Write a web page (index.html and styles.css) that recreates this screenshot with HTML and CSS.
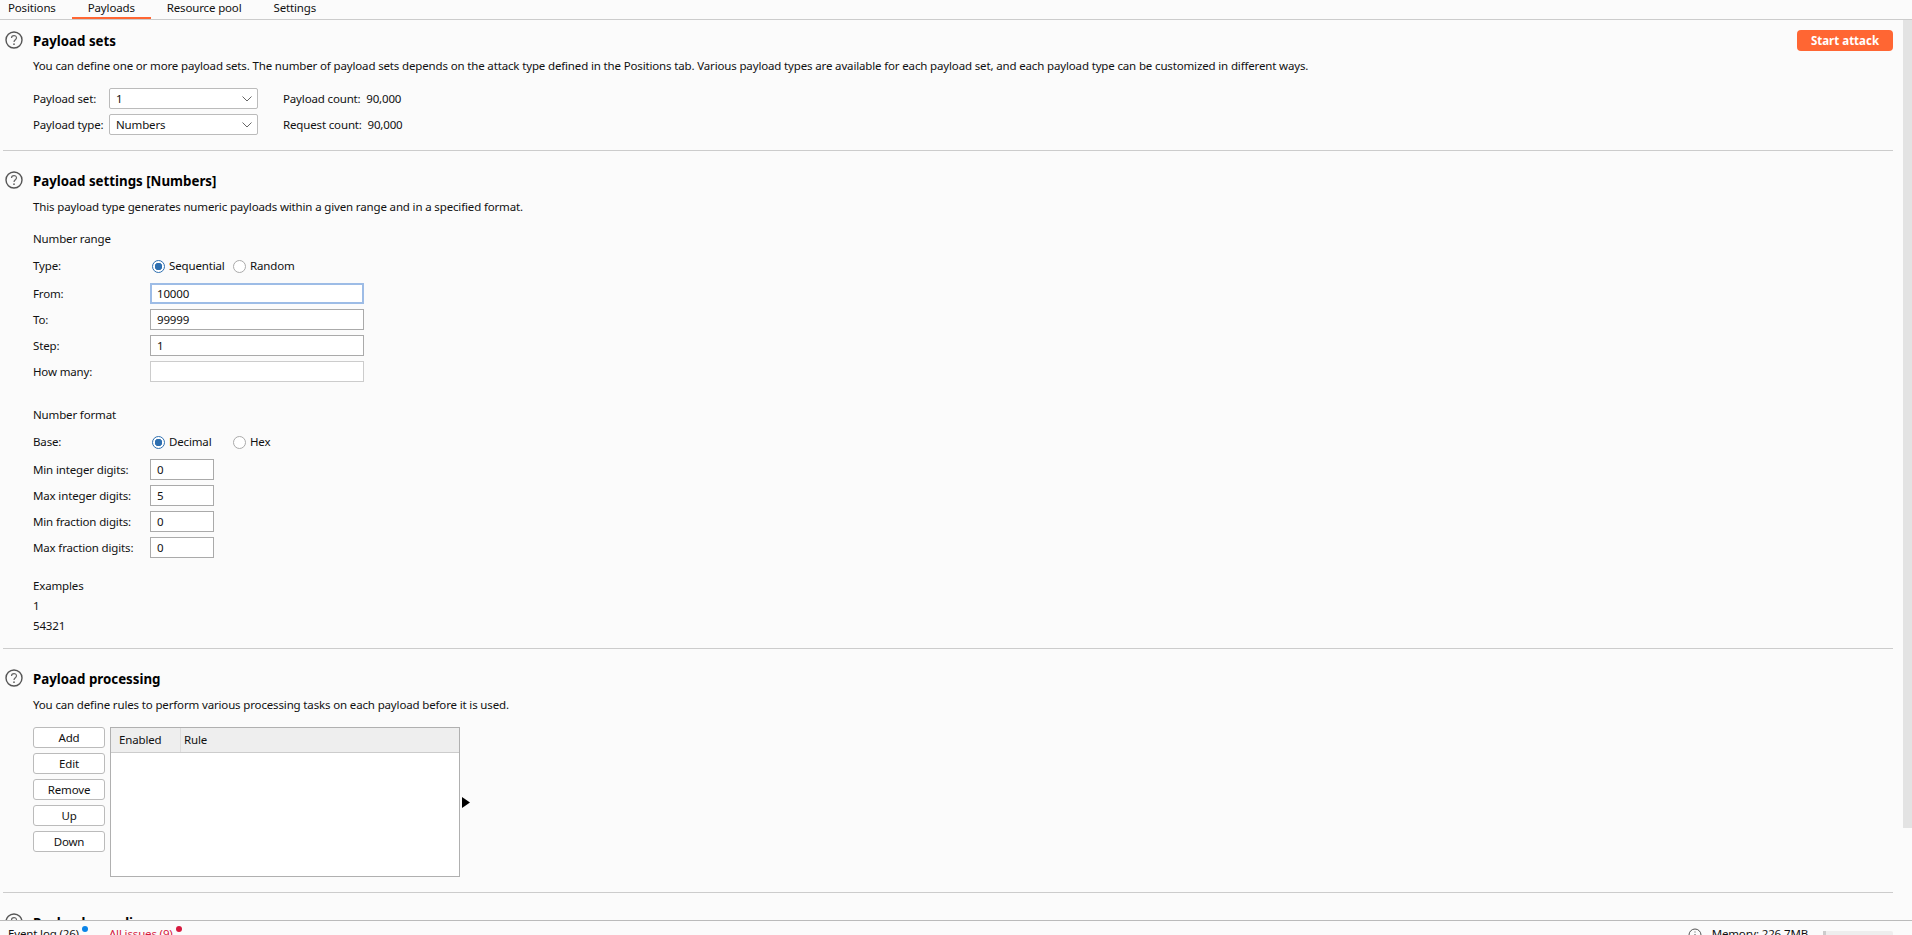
FILE: index.html
```html
<!DOCTYPE html>
<html lang="en">
<head>
    <meta charset="UTF-8">
    <title>Payloads</title>
    <link rel="stylesheet" href="styles.css">
</head>
<body>
    <div class="tabs">
        <div class="tab">Positions</div>
        <div class="tab tab-on">Payloads</div>
        <div class="tab">Resource pool</div>
        <div class="tab">Settings</div>
    </div>
    <div class="middle">
        <div class="content">
            <div class="section first">
                <div class="head">
                    <svg class="help" width="18" height="18" viewBox="0 0 18 18"><circle cx="9" cy="9" r="8" fill="none" stroke="#555" stroke-width="1.4"/><path d="M6.5 7c0-3.200 5-3.200 5-.2 0 1.900-2.500 1.900-2.500 4.200" fill="none" stroke="#666" stroke-width="1.200"/><circle cx="9" cy="13.200" r=".9" fill="#666"/></svg>
                    <h2>Payload sets</h2>
                    <button class="start">Start attack</button>
                </div>
                <p class="desc">You can define one or more payload sets. The number of payload sets depends on the attack type defined in the Positions tab. Various payload types are available for each payload set, and each payload type can be customized in different ways.</p>
                <div class="set-row">
                    <span class="set-label">Payload set:</span>
                    <div class="select">1<svg width="10" height="6" viewBox="0 0 10 6"><path d="M.5.5L5 5 9.500.5" fill="none" stroke="#666"/></svg></div>
                    <span class="count">Payload count:&nbsp; 90,000</span>
                </div>
                <div class="set-row">
                    <span class="set-label">Payload type:</span>
                    <div class="select">Numbers<svg width="10" height="6" viewBox="0 0 10 6"><path d="M.5.5L5 5 9.500.5" fill="none" stroke="#666"/></svg></div>
                    <span class="count">Request count:&nbsp; 90,000</span>
                </div>
            </div>

            <div class="section">
                <div class="head">
                    <svg class="help" width="18" height="18" viewBox="0 0 18 18"><circle cx="9" cy="9" r="8" fill="none" stroke="#555" stroke-width="1.4"/><path d="M6.5 7c0-3.200 5-3.200 5-.2 0 1.900-2.500 1.900-2.500 4.200" fill="none" stroke="#666" stroke-width="1.200"/><circle cx="9" cy="13.200" r=".9" fill="#666"/></svg>
                    <h2>Payload settings [Numbers]</h2>
                </div>
                <p class="desc">This payload type generates numeric payloads within a given range and in a specified format.</p>
                <div class="sub">Number range</div>
                <div class="radio-row">
                    <span class="label">Type:</span>
                    <span class="radio radio-on"></span><span class="radio-text">Sequential</span>
                    <span class="radio"></span><span>Random</span>
                </div>
                <div class="field"><span class="label">From:</span><div class="input focus">10000</div></div>
                <div class="field"><span class="label">To:</span><div class="input">99999</div></div>
                <div class="field"><span class="label">Step:</span><div class="input">1</div></div>
                <div class="field"><span class="label">How many:</span><div class="input off"></div></div>

                <div class="sub sub-gap">Number format</div>
                <div class="radio-row">
                    <span class="label">Base:</span>
                    <span class="radio radio-on"></span><span class="radio-text">Decimal</span>
                    <span class="radio"></span><span>Hex</span>
                </div>
                <div class="field"><span class="label">Min integer digits:</span><div class="input small">0</div></div>
                <div class="field"><span class="label">Max integer digits:</span><div class="input small">5</div></div>
                <div class="field"><span class="label">Min fraction digits:</span><div class="input small">0</div></div>
                <div class="field"><span class="label">Max fraction digits:</span><div class="input small">0</div></div>

                <div class="line line-gap">Examples</div>
                <div class="line">1</div>
                <div class="line">54321</div>
            </div>

            <div class="section">
                <div class="head">
                    <svg class="help" width="18" height="18" viewBox="0 0 18 18"><circle cx="9" cy="9" r="8" fill="none" stroke="#555" stroke-width="1.4"/><path d="M6.5 7c0-3.200 5-3.200 5-.2 0 1.900-2.500 1.900-2.500 4.200" fill="none" stroke="#666" stroke-width="1.200"/><circle cx="9" cy="13.200" r=".9" fill="#666"/></svg>
                    <h2>Payload processing</h2>
                </div>
                <p class="desc">You can define rules to perform various processing tasks on each payload before it is used.</p>
                <div class="rules">
                    <div class="buttons">
                        <button class="btn">Add</button>
                        <button class="btn">Edit</button>
                        <button class="btn">Remove</button>
                        <button class="btn">Up</button>
                        <button class="btn">Down</button>
                    </div>
                    <div class="table">
                        <div class="thead">
                            <div class="th th-first">Enabled</div>
                            <div class="th">Rule</div>
                        </div>
                    </div>
                    <svg class="split" width="8" height="11" viewBox="0 0 8 11"><path d="M0 0l8 5.500L0 11z" fill="#000"/></svg>
                </div>
            </div>

            <div class="section last">
                <div class="head">
                    <svg class="help" width="18" height="18" viewBox="0 0 18 18"><circle cx="9" cy="9" r="8" fill="none" stroke="#555" stroke-width="1.4"/><path d="M6.5 7c0-3.200 5-3.200 5-.2 0 1.900-2.500 1.900-2.500 4.200" fill="none" stroke="#666" stroke-width="1.200"/><circle cx="9" cy="13.200" r=".9" fill="#666"/></svg>
                    <h2>Payload encoding</h2>
                </div>
            </div>
        </div>
        <div class="scroll"><div class="thumb"></div></div>
    </div>
    <div class="status">
        <span class="log">Event log (26)<i class="dot blue"></i></span>
        <span class="issues">All issues (9)<i class="dot red"></i></span>
        <svg class="info" width="14" height="14" viewBox="0 0 14 14"><circle cx="7" cy="7" r="6" fill="none" stroke="#555"/><path d="M7 3.500v1M7 6v4" stroke="#555"/></svg>
        <span class="memory">Memory: 226.7MB</span>
        <div class="bar"><div class="bar-fill"></div></div>
    </div>
</body>
</html>
```

FILE: styles.css
```css
*{
    padding:0;
    margin:0;
    box-sizing:border-box;
}
html,body{
    height:100%;
    overflow:hidden;
}
body{
    display:flex;
    flex-direction:column;
    background:#fbfbfb;
    color:#111;
    font:11.5px/20px "Noto Sans",sans-serif;
    letter-spacing:-.15px;
}
.tabs{
    display:flex;
    height:20px;
    border-bottom:1px solid #ccc;
    flex:none;
}
.tab{
    padding:0 16px 0 8px;
    height:19px;
    line-height:15px;
}
.tab + .tab{
    padding:0 16px;
}
.tab-on{
    border-bottom:2px solid #ff6633;
}
.middle{
    display:flex;
    flex:1;
    min-height:0;
    overflow:hidden;
}
.content{
    flex:1;
    padding:10px 10px 0 3px;
}
.section{
    border-bottom:1px solid #ccc;
    padding-bottom:12px;
    margin-bottom:19px;
}
.first{
    padding-bottom:10px;
}
.last{
    border-bottom:none;
}
.head{
    display:flex;
    align-items:center;
    height:20px;
}
.help{
    flex:none;
    margin:0 10px 0 2px;
}
h2{
    margin-top:1px;
    font-size:13.3px;
    font-weight:700;
    letter-spacing:0;
    color:#000;
}
.start{
    margin-left:auto;
    width:96px;
    height:21px;
    border:none;
    border-radius:4px;
    background:#ff6633;
    color:#fff;
    font:700 11.5px "Noto Sans",sans-serif;
}
.desc{
    margin:7px 0 12px 30px;
}
.first .desc{
    margin-top:6px;
}
.set-row{
    display:flex;
    align-items:center;
    height:21px;
    margin:0 0 5px 30px;
}
.set-label{
    width:76px;
}
.select{
    display:flex;
    align-items:center;
    justify-content:space-between;
    width:149px;
    height:21px;
    padding:0 5px 0 6px;
    background:#fff;
    border:1px solid #bbb;
    border-radius:2px;
}
.count{
    margin-left:25px;
}
.sub{
    margin:12px 0 7px 30px;
}
.sub-gap{
    margin-top:23px;
}
.radio-row{
    display:flex;
    align-items:center;
    height:20px;
    margin:0 0 7px 30px;
}
.label{
    width:117px;
    flex:none;
}
.radio{
    width:13px;
    height:13px;
    border:1px solid #aaa;
    border-radius:50%;
    background:#fff;
    margin:0 4px 0 2px;
    flex:none;
}
.radio-on{
    border-color:#2e6fb0;
    background:radial-gradient(circle,#2e6fb0 0 3.500px,#fff 4px);
}
.radio-text{
    width:62px;
    flex:none;
}
.field{
    display:flex;
    align-items:center;
    height:21px;
    margin:0 0 5px 30px;
}
.input{
    width:214px;
    height:21px;
    padding:0 6px;
    background:#fff;
    border:1px solid #aaa;
}
.small{
    width:64px;
}
.focus{
    border:2px solid #9dbce6;
    padding:0 5px;
    line-height:17px;
}
.off{
    border-color:#ccc;
}
.line{
    margin-left:30px;
}
.line-gap{
    margin-top:18px;
}
.rules{
    display:flex;
    align-items:center;
    margin-left:30px;
    height:150px;
    margin-bottom:3px;
}
.buttons{
    display:flex;
    flex-direction:column;
    gap:5px;
    align-self:flex-start;
    margin-right:5px;
}
.btn{
    width:72px;
    height:21px;
    background:#fff;
    border:1px solid #bbb;
    border-radius:3px;
    color:#111;
    font:11.5px "Noto Sans",sans-serif;
    letter-spacing:-.15px;
}
.table{
    width:350px;
    height:150px;
    background:#fff;
    border:1px solid #b0b0b0;
}
.thead{
    display:flex;
    height:25px;
    background:#eee;
    border-bottom:1px solid #ccc;
}
.th{
    padding:2px 3px;
}
.th-first{
    width:70px;
    padding-left:8px;
    border-right:1px solid #ddd;
}
.split{
    margin-left:2px;
}
.scroll{
    width:9px;
    flex:none;
}
.thumb{
    height:808px;
    background:#e3e3e3;
}
.status{
    display:flex;
    align-items:flex-start;
    flex:none;
    height:15px;
    padding:3px 19px 0 8px;
    background:#fbfbfb;
    border-top:1px solid #bbb;
    overflow:hidden;
}
.log,.issues{
    position:relative;
}
.issues{
    margin-left:30px;
    color:#d6193e;
}
.dot{
    position:absolute;
    top:2px;
    right:-9px;
    width:6px;
    height:6px;
    border-radius:50%;
}
.blue{
    background:#0a84e8;
}
.red{
    background:#d6193e;
}
.info{
    margin:4px 10px 0 auto;
}
.memory{
    margin-right:15px;
}
.bar{
    width:70px;
    height:12px;
    margin-top:7px;
    background:#eee;
    border-radius:2px;
}
.bar-fill{
    width:3px;
    height:12px;
    background:#ccc;
}
```
